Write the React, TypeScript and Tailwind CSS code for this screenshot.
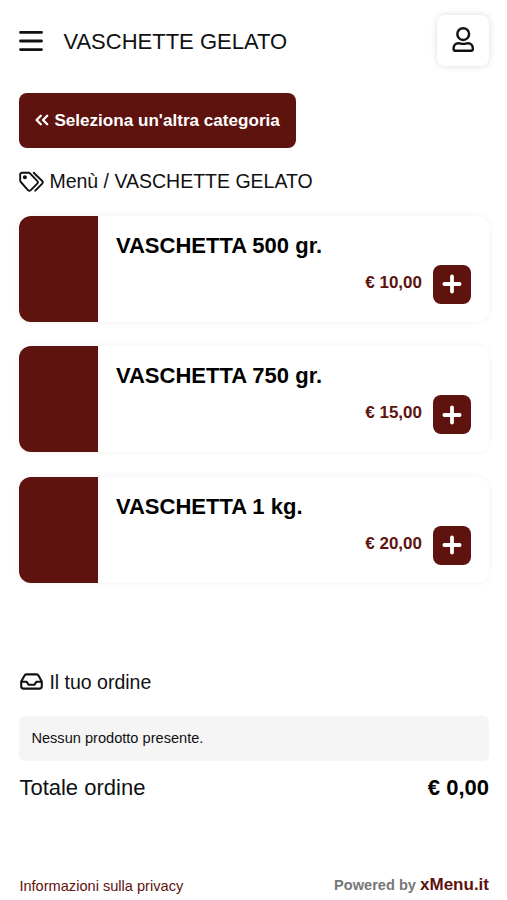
interface Product {
    name: string;
    price: string;
}

const products: Product[] = [
    { name: 'VASCHETTA 500 gr.', price: '10,00' },
    { name: 'VASCHETTA 750 gr.', price: '15,00' },
    { name: 'VASCHETTA 1 kg.', price: '20,00' },
];

function Header() {
    return (
        <header className="flex h-[51px] items-center">
            <button aria-label="Menu" className="mr-5">
                <svg width="24" height="22" viewBox="0 0 24 22" fill="none" stroke="currentColor" strokeWidth="2.8" strokeLinecap="round">
                    <path d="M1.5 2.4h21M1.5 11h21M1.5 19.6h21" />
                </svg>
            </button>
            <h1 className="pt-[2px] text-[22px]">VASCHETTE GELATO</h1>
            <button aria-label="Account" className="ml-auto flex h-[51px] w-[52px] items-center justify-center rounded-lg bg-white shadow-[0_0_7px_rgba(0,0,0,0.14)]">
                <svg className="mb-[2px]" width="24" height="26" viewBox="0 0 24 26" fill="none" stroke="currentColor" strokeWidth="2.4">
                    <circle cx="12.2" cy="7.1" r="5.9" />
                    <path d="M2.6 22.6v-1.1c0-3.2 2.1-5.3 4.8-5.3 1.8 0 2.9.7 4.8.7s3-.7 4.8-.7c2.7 0 4.8 2.1 4.8 5.3v1.1c0 .8-.4 1.2-1.2 1.2H3.8c-.8 0-1.2-.4-1.2-1.2Z" />
                </svg>
            </button>
        </header>
    );
}

function ProductCard({ name, price }: Product) {
    return (
        <article className="flex h-[106px] overflow-hidden rounded-xl bg-white shadow-[0_0_7px_rgba(0,0,0,0.06)]">
            <div className="w-[78.5px] bg-[#5e130e]" />
            <div className="flex flex-1 flex-col pr-[18px] pl-[18px]">
                <h2 className="mt-4 text-[22px] leading-7 font-bold text-black">{name}</h2>
                <div className="mt-[5px] flex items-center justify-end gap-[11px]">
                    <span className="mb-[3px] text-[17px] font-bold text-[#5e130e]">€ {price}</span>
                    <button aria-label="Aggiungi" className="flex h-[39px] w-[38px] items-center justify-center rounded-lg bg-[#5e130e] text-white">
                        <svg width="20" height="20" viewBox="0 0 20 20" stroke="currentColor" strokeWidth="3.8" strokeLinecap="round">
                            <path d="M10 2.4v15.2M2.4 10h15.2" />
                        </svg>
                    </button>
                </div>
            </div>
        </article>
    );
}

export default function App() {
    return (
        <div className="flex h-[900px] flex-col bg-white pt-[15px] pr-[18px] pl-[19.4px] font-['Liberation_Sans',Arial,sans-serif] text-[#111]">
            <Header />

            <button className="mt-[27px] flex h-[55px] w-[277px] items-center rounded-lg bg-[#5e130e] pl-4 text-[17.1px] font-bold text-white">
                <svg className="mr-[5px] mb-[2px]" width="14" height="12" viewBox="0 0 14 12" fill="none" stroke="currentColor" strokeWidth="2.3" strokeLinecap="round" strokeLinejoin="round">
                    <path d="M5.8 1.8 1.6 6l4.2 4.2M12.2 1.8 8 6l4.2 4.2" />
                </svg>
                Seleziona un'altra categoria
            </button>

            <nav className="mt-[20px] flex h-7 items-center text-[19.5px]">
                <svg className="mr-[5px]" width="25" height="22" viewBox="0 0 25 22" fill="none" stroke="currentColor" strokeWidth="1.9" strokeLinejoin="round" strokeLinecap="round">
                    <path d="M1.2 3.3v6.2c0 .6.2 1.1.6 1.5l7.2 8.1c.8.8 2 .8 2.8 0l6.4-6.4c.8-.8.8-2 0-2.8L11 2.3c-.4-.4-.9-.6-1.5-.6H3c-1 0-1.8.7-1.8 1.6ZM14.7 1.8l8.5 8.2c.7.8.7 1.8 0 2.6l-6.9 7.1" />
                    <circle cx="5.9" cy="6.2" r="1.1" fill="currentColor" />
                </svg>
                Menù / VASCHETTE GELATO
            </nav>

            <main className="mt-[19.5px] flex flex-col gap-[24.5px]">
                {products.map((product) => (
                    <ProductCard key={product.name} {...product} />
                ))}
            </main>

            <section className="mt-[86px]">
                <h2 className="flex h-7 items-center text-[19.5px]">
                    <svg className="mr-[6px] mb-[3px] ml-[1px]" width="23" height="17" viewBox="0 0 23 17" fill="none" stroke="currentColor" strokeWidth="2.1" strokeLinejoin="round">
                        <path d="M1.2 9.2v4c0 1.4 1 2.4 2.4 2.4h15.8c1.4 0 2.4-1 2.4-2.4v-4c0-.5-.1-.9-.3-1.3l-2.9-5.2c-.5-.9-1.2-1.3-2.1-1.3h-10c-.9 0-1.6.4-2.1 1.3L1.5 7.9c-.2.4-.3.8-.3 1.3ZM1.5 8.8h5.2l2 3h5.6l2-3h5.2" />
                    </svg>
                    Il tuo ordine
                </h2>
                <p className="mt-[19.5px] flex h-[45px] items-center rounded-md bg-[#f5f5f5] pl-3 text-[14.6px]">Nessun prodotto presente.</p>
                <div className="mt-[9px] flex h-[34px] items-center justify-between text-[22px]">
                    <span>Totale ordine</span>
                    <strong className="text-black">€ 0,00</strong>
                </div>
            </section>

            <footer className="mt-auto mb-[3px] flex items-baseline justify-between text-[14.6px] text-[#5e130e]">
                <a href="#" className="relative top-px">Informazioni sulla privacy</a>
                <span className="font-bold text-[#777]">
                    Powered by <a href="#" className="text-[17px] text-[#5e130e]">xMenu.it</a>
                </span>
            </footer>
        </div>
    );
}
